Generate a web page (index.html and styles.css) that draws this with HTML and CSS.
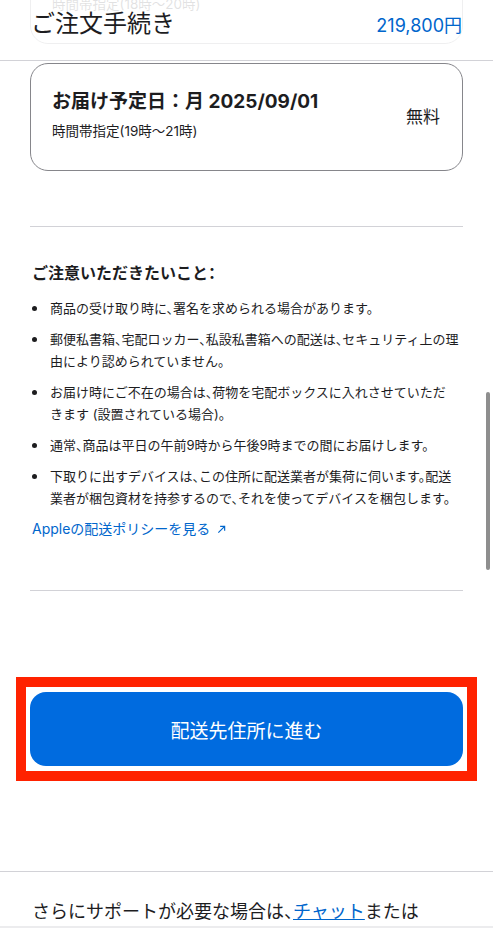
FILE: index.html
```html
<!DOCTYPE html>
<html lang="ja">
<head>
  <meta charset="UTF-8">
  <title>ご注文手続き</title>
  <meta name="viewport" content="width=device-width, initial-scale=1.0">
  <link rel="stylesheet" href="styles.css">
</head>
<body>
  <div class="page">
    <div class="top-area">
      <div class="delivery-card ghost">
        <div>
          <p class="card-title">お届け予定日：日 2025/08/31</p>
          <p class="card-sub">時間帯指定(18時〜20時)</p>
        </div>
        <span class="card-price">無料</span>
      </div>
      <header class="summary-bar">
        <h1>ご注文手続き</h1>
        <span class="total">219,800円</span>
      </header>
    </div>

    <section class="delivery">
      <div class="delivery-card">
        <div>
          <p class="card-title">お届け予定日：月 2025/09/01</p>
          <p class="card-sub">時間帯指定(19時〜21時)</p>
        </div>
        <span class="card-price">無料</span>
      </div>
    </section>

    <hr class="divider">

    <section class="notes">
      <h2>ご注意いただきたいこと：</h2>
      <ul>
        <li>商品の受け取り時に、署名を求められる場合があります。</li>
        <li>郵便私書箱、宅配ロッカー、私設私書箱への配送は、セキュリティ上の理由により認められていません。</li>
        <li>お届け時にご不在の場合は、荷物を宅配ボックスに入れさせていただ<br>きます (設置されている場合)。</li>
        <li>通常、商品は平日の午前9時から午後9時までの間にお届けします。</li>
        <li>下取りに出すデバイスは、この住所に配送業者が集荷に伺います。配送業者が梱包資材を持参するので、それを使ってデバイスを梱包します。</li>
      </ul>
      <a class="policy-link" href="#">Appleの配送ポリシーを見る
        <svg width="9" height="9" viewBox="0 0 10 10"><path d="M1.5 8.5 L8.5 1.5 M3.5 1.5 H8.5 V6.5" fill="none" stroke="currentColor" stroke-width="1.3"/></svg>
      </a>
    </section>

    <hr class="divider">

    <div class="cta">
      <div class="highlight">
        <button class="continue-btn">配送先住所に進む</button>
      </div>
    </div>

    <hr class="divider full">

    <p class="help">さらにサポートが必要な場合は、<a href="#">チャット</a>または</p>
    <div class="bottom-edge"></div>

    <div class="scrollbar"></div>
  </div>
</body>
</html>
```

FILE: styles.css
```css
* { margin: 0; padding: 0; box-sizing: border-box; }
body {
  font-family: "Inter", "Noto Sans CJK JP", sans-serif;
  background: #fff;
  color: #1d1d1f;
}
.page { position: relative; width: 493px; overflow: hidden; }

/* sticky summary bar with the previous card peeking under it */
.top-area { position: relative; height: 61px; overflow: hidden; }
.top-area .ghost { margin-top: -64px; }
.summary-bar {
  position: absolute;
  inset: 0;
  display: flex;
  justify-content: space-between;
  align-items: baseline;
  padding: 8px 31px 0 31px;
  background: rgba(255, 255, 255, 0.87);
  border-bottom: 1px solid #d2d2d7;
}
.summary-bar h1 { font-size: 24px; font-weight: 400; line-height: 32px; }
.summary-bar .total { font-size: 18px; color: #0066cc; }

/* delivery card */
.delivery { padding: 2px 30px 0; }
.delivery-card {
  display: flex;
  justify-content: space-between;
  align-items: center;
  margin: 0 30px;
  padding: 26px 22px 30px 21px;
  border: 1px solid #86868b;
  border-radius: 18px;
}
.delivery .delivery-card { margin: 0; }
.card-title { font-size: 19px; font-weight: 700; line-height: 24px; }
.card-sub { font-size: 13.5px; line-height: 18px; margin-top: 8px; }
.card-price { font-size: 17px; }

.divider {
  border: none;
  border-top: 1px solid #d2d2d7;
  margin: 55px 30px 0;
}

/* notes */
.notes { padding: 35px 30px 0 32px; font-feature-settings: "halt"; }
.notes h2 { font-size: 16px; font-weight: 700; line-height: 22px; margin-bottom: 13px; }
.notes ul { list-style: none; }
.notes li {
  display: grid;
  grid-template-columns: 18px 1fr;
  font-size: 13px;
  line-height: 22px;
  margin-bottom: 9px;
}
.notes li::before {
  content: "";
  width: 5px;
  height: 5px;
  margin: 9px 0 0 0;
  border-radius: 50%;
  background: #1d1d1f;
}
.policy-link {
  display: inline-block;
  margin-top: 1px;
  font-size: 14px;
  line-height: 20px;
  color: #0066cc;
  text-decoration: none;
}
.policy-link svg { margin-left: 3px; }
.notes + .divider { margin-top: 51px; }

/* continue button */
.cta { padding: 86px 16px 0 16px; }
.highlight {
  border: 10px solid #ff2200;
  padding: 5px 4px 5px 4px;
}
.continue-btn {
  display: block;
  width: 100%;
  height: 74px;
  border: none;
  border-radius: 16px;
  background: #006bdf;
  color: #fff;
  font-family: inherit;
  font-size: 19px;
}
.divider.full { margin: 90px 0 0; }

.help {
  padding: 27px 32px 0;
  font-size: 18px;
  line-height: 26px;
  font-feature-settings: "halt";
}
.help a { color: #0066cc; }
.bottom-edge { height: 2px; margin-top: 1px; background: #ececee; }

.scrollbar {
  position: absolute;
  right: 3px;
  top: 392px;
  width: 4px;
  height: 178px;
  border-radius: 2px;
  background: #8e8e8e;
}
```
